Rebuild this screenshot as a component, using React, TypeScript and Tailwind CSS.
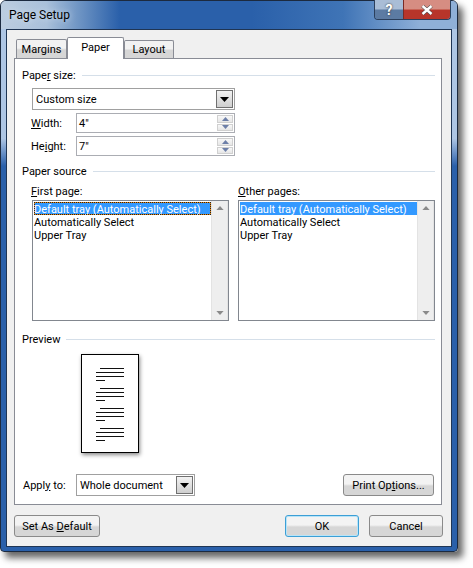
import React from "react";

const font = { fontFamily: 'Roboto,"Open Sans",sans-serif' };

function Header({ label, gap }: { label: React.ReactNode; gap: string }) {
  return (
    <div className={`flex h-[14px] items-center ${gap}`}>
      <span className="whitespace-nowrap pt-[2px] leading-[14px]">{label}</span>
      <div className="h-px flex-1 bg-[#d5dfe9]" />
    </div>
  );
}

function Tri({ up = false, color = "#000", w = 9, h = 5 }: { up?: boolean; color?: string; w?: number; h?: number }) {
  return (
    <svg width={w} height={h} viewBox="0 0 9 5" className="block">
      <path d={up ? "M4.5 0L9 5H0Z" : "M0 0H9L4.5 5Z"} fill={color} />
    </svg>
  );
}

function DropButton() {
  return (
    <div className="m-px flex w-[17px] items-center justify-center border border-[#707070] bg-gradient-to-b from-[#f2f2f2] to-[#cfcfcf]">
      <Tri />
    </div>
  );
}

function Spin() {
  return (
    <div className="flex w-[17px] flex-col gap-px py-px pr-px">
      <div className="flex flex-1 items-center justify-center border border-[#d0d0d0] bg-gradient-to-b from-[#f8f8f8] to-[#e6e6e6]">
        <Tri up color="#6d7fa8" w={7} h={4} />
      </div>
      <div className="flex flex-1 items-center justify-center border border-[#d0d0d0] bg-gradient-to-b from-[#f8f8f8] to-[#e6e6e6]">
        <Tri color="#6d7fa8" w={7} h={4} />
      </div>
    </div>
  );
}

function ListBox({ focus, width }: { focus?: boolean; width: string }) {
  return (
    <div className={`flex h-[121px] border border-[#82878f] bg-white ${width}`}>
      <div className="flex-1 pt-px pl-px leading-[15px]">
        <div className={`h-[13px] whitespace-nowrap bg-[#3399ff] text-white ${focus ? "shadow-[inset_0_0_0_1px_#e8850c] outline outline-1 -outline-offset-1 outline-dotted outline-[#222]" : ""}`}>
          Default tray (Automatically Select)
        </div>
        <div className="h-[13px] whitespace-nowrap">Automatically Select</div>
        <div className="h-[13px] whitespace-nowrap">Upper Tray</div>
      </div>
      <div className="flex w-[17px] flex-col items-center justify-between border-x border-[#e3e3e3] bg-[#eeeeee] py-[5px]">
        <Tri up color="#8a8a8a" w={8} h={4} />
        <Tri color="#8a8a8a" w={8} h={4} />
      </div>
    </div>
  );
}

function Btn({ children, w, cls = "" }: { children: React.ReactNode; w: string; cls?: string }) {
  return (
    <div className={`flex h-[22px] items-center justify-center rounded-[3px] border bg-gradient-to-b from-[#f3f3f3] from-45% to-[#d6d6d6] to-55% ${cls || "border-[#8a8a8a]"} ${w}`}>
      <span className="pt-[2px] leading-[14px]">{children}</span>
    </div>
  );
}

function Field({ label, value }: { label: React.ReactNode; value: string }) {
  return (
    <div className="mt-[3px] flex h-[20px] items-center pl-[9px]">
      <span className="w-[45px] whitespace-nowrap pt-[2px]">{label}</span>
      <div className="flex h-full w-[159px] border border-[#abadb3] bg-white">
        <div className="flex-1 pl-[2px] leading-[20px]">{value}</div>
        <Spin />
      </div>
    </div>
  );
}

function PreviewPage() {
  const rows = [368, 388, 408, 428];
  return (
    <div className="mt-2 ml-[59px] h-[99px] w-[58px] border border-black bg-white shadow-[1px_2px_4px_rgba(0,0,0,0.45)]">
      <svg width="56" height="97" viewBox="0 0 56 97" className="block">
        {rows.map((r) => (
          <g key={r} stroke="#111" strokeWidth="1">
            <path d={`M18 ${r - 354.5}H42`} />
            <path d={`M14 ${r - 350.5}H42`} />
            <path d={`M14 ${r - 346.5}H42`} />
            <path d={`M14 ${r - 342.5}H23`} />
          </g>
        ))}
      </svg>
    </div>
  );
}

export default function App() {
  return (
    <div className="h-[568px] w-[473px] overflow-hidden bg-white text-[11px] text-black" style={font}>
      <div className="h-[552px] w-[458px] rounded-t-[6px] rounded-b-[4px] border border-[#1c2a3f] bg-gradient-to-b from-[#aec6e4] from-25% to-[#2a60aa] to-30% shadow-[5px_6px_7px_rgba(0,0,0,0.6)]">
        <div className="relative flex h-[28px] items-start rounded-t-[5px] bg-[linear-gradient(90deg,#bccde0_0%,#a9c0da_10%,#6f95c4_17%,#2a60aa_26%,#2a60aa_55%,#3f74b6_75%,#8fb0d8_92%)] pl-[8px] pt-[6px]">
          <span className="text-[12px] leading-[16px] [text-shadow:0_0_6px_#dbe6f2]">Page Setup</span>
          <div className="absolute top-[-1px] right-[6px] flex h-[20px] overflow-hidden rounded-b-[4px] border border-t-0 border-[#2b3f5c]">
            <div className="flex w-[28px] items-center justify-center bg-gradient-to-b from-[#a9bdd6] from-45% to-[#5c7ba3] to-55% text-[14px] font-bold leading-none text-white [text-shadow:0_0_2px_#222]">
              ?
            </div>
            <div className="flex w-[47px] items-center justify-center border-l border-[#7a2a25] bg-gradient-to-b from-[#d68d82] from-45% to-[#b8352a] to-55%">
              <svg width="12" height="10" viewBox="0 0 12 10">
                <path d="M1.5 1L10.5 9M10.5 1L1.5 9" stroke="#4a4a4a" strokeWidth="3.6" />
                <path d="M1.5 1L10.5 9M10.5 1L1.5 9" stroke="#fff" strokeWidth="2.4" />
              </svg>
            </div>
          </div>
        </div>
        <div className="mx-[5px] h-[518px] border border-[#1f3554] bg-[#f0f0f0] px-[7px]">
          <div className="flex h-[28px] items-end pl-[2px]">
            <div className="flex h-[19px] w-[51px] items-center justify-center rounded-t-[2px] border border-b-0 border-[#898c95] bg-gradient-to-b from-[#f2f2f2] from-45% to-[#d6d6d6] to-55% pt-[2px]">Margins</div>
            <div className="relative z-10 mb-[-1px] flex h-[22px] w-[57px] items-center justify-center rounded-t-[2px] border border-b-0 border-[#898c95] bg-white">Paper</div>
            <div className="flex h-[18px] w-[50px] items-center justify-center rounded-t-[2px] border border-b-0 border-[#898c95] bg-gradient-to-b from-[#f2f2f2] from-45% to-[#d6d6d6] to-55% pt-[2px]">Layout</div>
          </div>
          <div className="h-[447px] w-[428px] border border-[#898c95] bg-white pr-[6px] pl-[7px] pt-[9px]">
            <Header gap="gap-[6px]" label={<>Pape<u>r</u> size:</>} />
            <div className="mt-[6px] ml-[10px] flex h-[22px] w-[203px] border border-[#a0a0a0] bg-white">
              <div className="flex-1 pl-[3px] leading-[22px]">Custom size</div>
              <DropButton />
            </div>
            <Field label={<><u>W</u>idth:</>} value={'4"'} />
            <Field label={<>He<u>i</u>ght:</>} value={'7"'} />
            <div className="mt-[8px]">
              <Header gap="gap-[6px]" label="Paper source" />
            </div>
            <div className="mt-[6px] ml-[9px] flex">
              <div className="w-[207px]">
                <div className="h-[14px] leading-[16px]"><u>F</u>irst page:</div>
              </div>
              <div className="h-[14px] leading-[16px]"><u>O</u>ther pages:</div>
            </div>
            <div className="mt-[2px] ml-[10px] flex gap-[9px]">
              <ListBox focus width="w-[197px]" />
              <ListBox width="w-[197px]" />
            </div>
            <div className="mt-[11px]">
              <Header gap="gap-[6px]" label="Preview" />
            </div>
            <PreviewPage />
            <div className="mt-[21px] flex h-[22px] items-center">
              <span className="w-[54px] whitespace-nowrap pt-[2px] pl-px">Appl<u>y</u> to:</span>
              <div className="flex h-full w-[119px] border border-[#a0a0a0] bg-white">
                <div className="flex-1 whitespace-nowrap pl-[3px] leading-[22px]">Whole document</div>
                <DropButton />
              </div>
              <div className="ml-auto mr-[1px]">
                <Btn w="w-[91px]">Print Op<u>t</u>ions...</Btn>
              </div>
            </div>
          </div>
          <div className="mt-[10px] flex w-[429px]">
            <Btn w="w-[86px]">Set As <u>D</u>efault</Btn>
            <div className="ml-auto flex gap-[10px]">
              <Btn w="w-[74px]" cls="border-[#3c9fd6] shadow-[inset_0_0_0_1px_#b8e4f8]">OK</Btn>
              <Btn w="w-[74px]">Cancel</Btn>
            </div>
          </div>
        </div>
      </div>
    </div>
  );
}
